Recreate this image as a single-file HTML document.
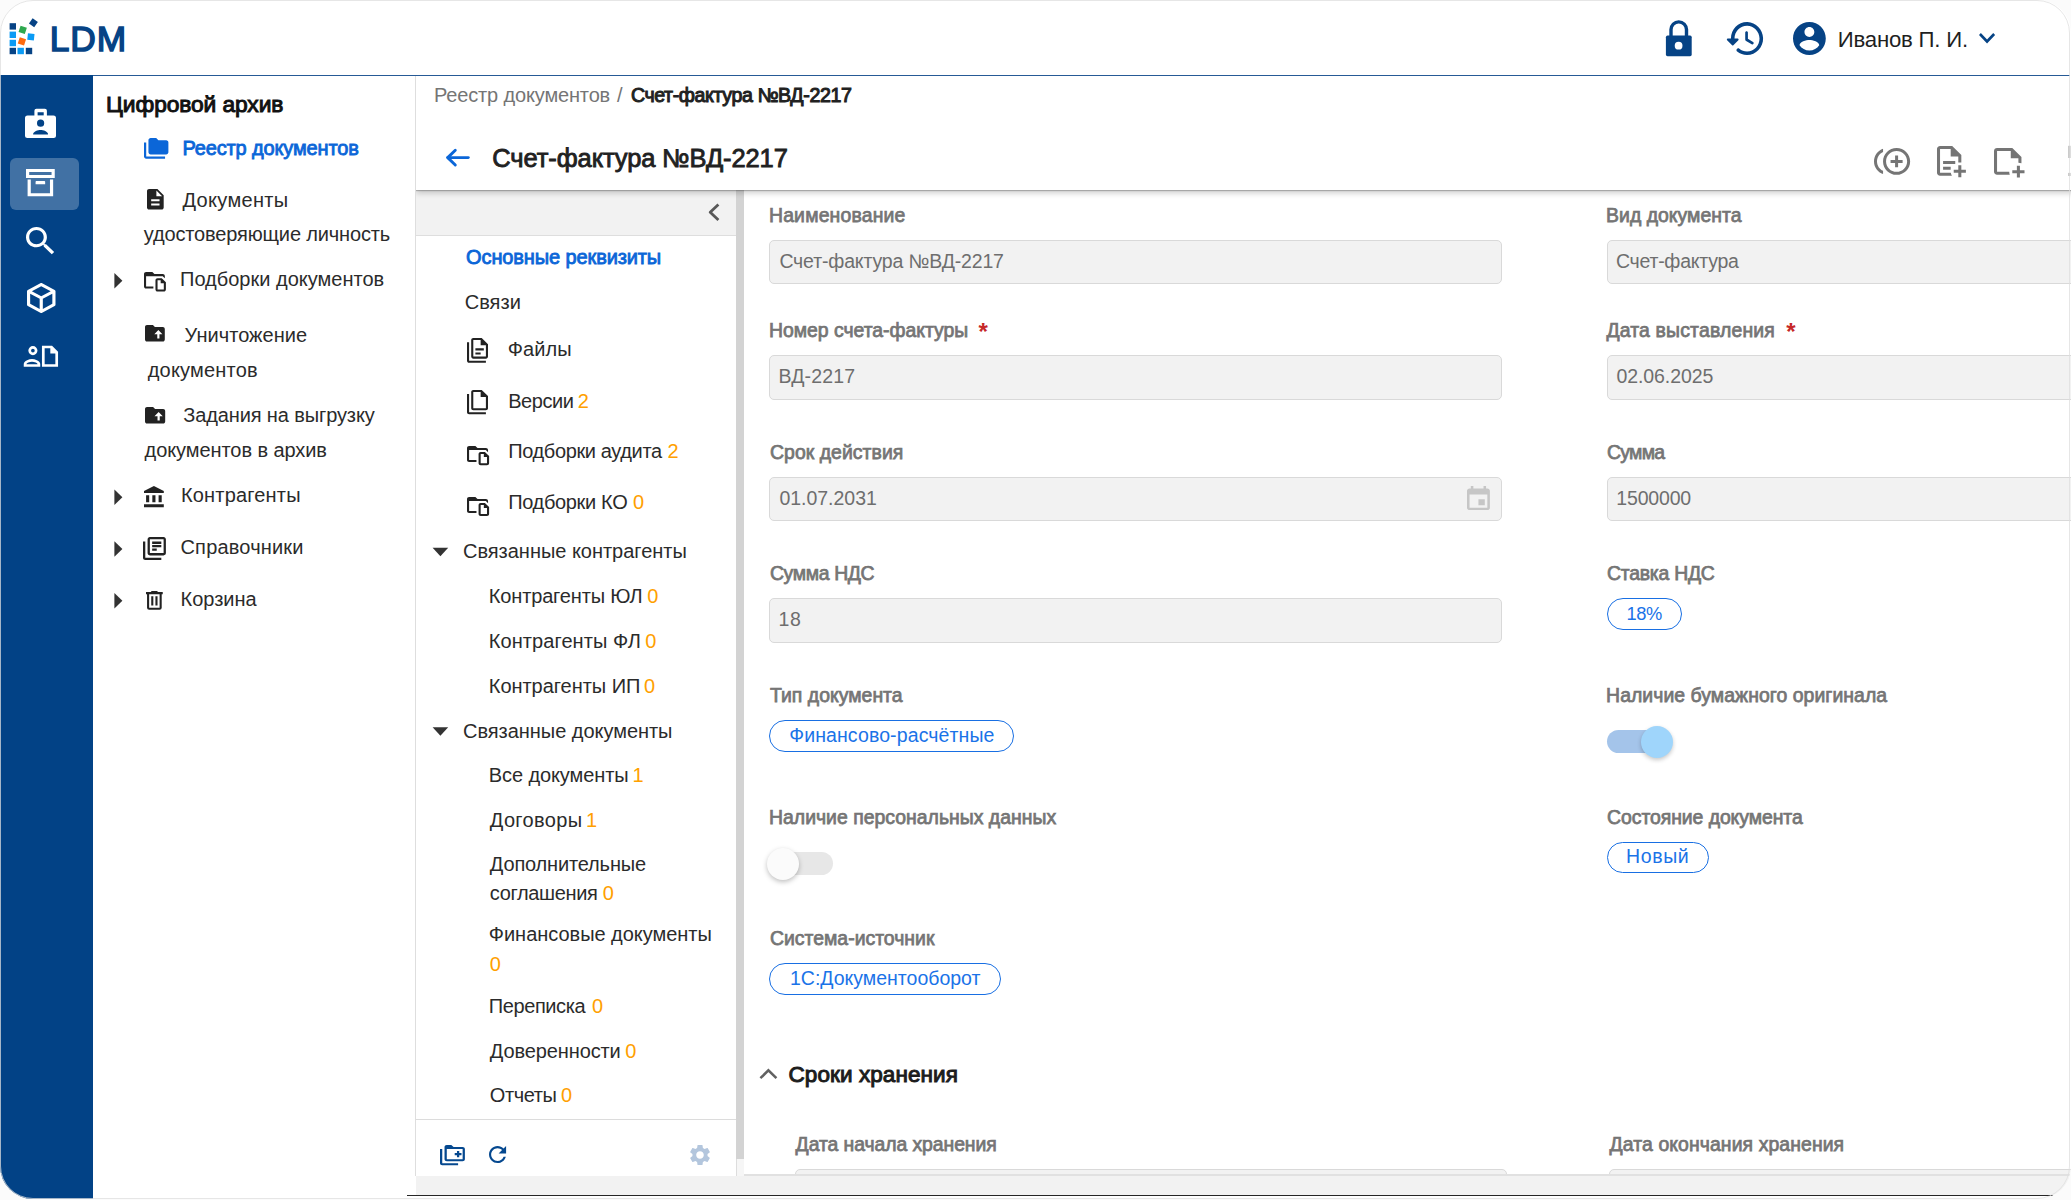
<!DOCTYPE html>
<html lang="ru"><head><meta charset="utf-8"><title>LDM — Счет-фактура №ВД-2217</title>
<style>
html,body{margin:0;padding:0}
body{width:2071px;height:1200px;overflow:hidden;background:#fbfbfb;font-family:"Liberation Sans",sans-serif;position:relative}
#f{position:absolute;left:0;top:0;width:2070.6px;height:1199.2px;border-radius:33px;overflow:hidden;background:#fff}
#fb{position:absolute;left:-0.4px;top:-0.4px;width:2068.4px;height:1197px;border-radius:33px;border:1.3px solid rgba(222,222,222,.75);z-index:50}
.a{position:absolute}
.t{position:absolute;white-space:pre;line-height:1}
.i{position:absolute;overflow:visible}
.inp{position:absolute;background:#f2f2f2;border:1.2px solid #d9d9d9;border-radius:5px;box-sizing:border-box}
.chip{position:absolute;border:1.7px solid #186fe3;border-radius:17px;box-sizing:border-box;background:#fff}
</style></head><body>
<div id="f">
<div class="a" style="left:0px;top:74.6px;width:2070px;height:1.4px;background:#265a96"></div>
<div class="a" style="left:0px;top:74.6px;width:93.1px;height:1125px;background:#024286"></div>
<div class="a" style="left:10px;top:158.4px;width:69px;height:51.3px;background:rgba(255,255,255,.25);border-radius:6px"></div>
<div class="a" style="left:415px;top:76px;width:1px;height:1100px;background:#dedede"></div>
<div class="a" style="left:416px;top:190px;width:319.6px;height:45.6px;background:#f2f2f2;border-bottom:1px solid #dedede;box-sizing:border-box"></div>
<div class="a" style="left:735.6px;top:190px;width:8.0px;height:968.5px;background:#d3d3d3"></div>
<div class="a" style="left:735.6px;top:1158.5px;width:8.0px;height:18px;background:#f6f6f6;border-left:1px solid #ddd;box-sizing:border-box"></div>
<div class="a" style="left:416px;top:1119.2px;width:319.6px;height:1px;background:#dcdcdc"></div>
<div class="inp" style="left:769.4px;top:240.3px;width:732.4px;height:43.7px"></div>
<div class="inp" style="left:769.4px;top:355px;width:732.4px;height:44.6px"></div>
<div class="inp" style="left:769.4px;top:477px;width:732.4px;height:43.9px"></div>
<div class="inp" style="left:769.4px;top:598.2px;width:732.4px;height:44.5px"></div>
<div class="inp" style="left:1606.7px;top:240.3px;width:520px;height:43.7px"></div>
<div class="inp" style="left:1606.7px;top:355px;width:520px;height:44.6px"></div>
<div class="inp" style="left:1606.7px;top:477px;width:520px;height:43.9px"></div>
<div class="inp" style="left:795px;top:1169.3px;width:711.5px;height:44px"></div>
<div class="inp" style="left:1609px;top:1169.3px;width:520px;height:44px"></div>
<div class="chip" style="left:1606.7px;top:598.2px;width:75.1px;height:31.9px"></div>
<div class="chip" style="left:769.4px;top:720.25px;width:244.3px;height:31.4px"></div>
<div class="chip" style="left:1606.7px;top:841.5px;width:102.0px;height:31.9px"></div>
<div class="chip" style="left:769.4px;top:963.3px;width:231.2px;height:31.6px"></div>
<div class="a" style="left:1606.7px;top:730.3px;width:63.8px;height:22.6px;background:#a4c4ea;border-radius:12px"></div>
<div class="a" style="left:1641.1px;top:726px;width:32px;height:32px;background:#9fd5fb;border-radius:50%;box-shadow:0 2px 4px rgba(0,0,0,.22)"></div>
<div class="a" style="left:769.6px;top:852px;width:63.8px;height:23.2px;background:#e7e7e7;border-radius:12px"></div>
<div class="a" style="left:767.1px;top:848px;width:32px;height:32px;background:#fbfbfb;border-radius:50%;box-shadow:0 2px 5px rgba(0,0,0,.25)"></div>
<div class="a" style="left:416px;top:76px;width:1660px;height:114.3px;background:#fff;box-shadow:0 1px 1px rgba(0,0,0,.22),0 3px 6px rgba(0,0,0,.2);clip-path:inset(0 0 -12px 0);z-index:5"></div>
<div class="a" style="left:743.6px;top:1174.1px;width:1330px;height:1.8px;background:#e1e1e1;z-index:6"></div>
<div class="a" style="left:416px;top:1175.8px;width:1660px;height:19.3px;background:#f2f2f2;z-index:6"></div>
<div class="a" style="left:407px;top:1194.7px;width:1670px;height:1.4px;background:#262626;z-index:7"></div>
<div class="a" style="left:93.1px;top:1196.1px;width:1980px;height:5px;background:#fff;z-index:6"></div>
<div class="a" style="left:0;top:0;width:2071px;height:1200px;z-index:9">
<svg class="i" style="left:1726.80px;top:21.80px" width="36.10" height="33.10" viewBox="1.8 2.95 20.2 18.05" preserveAspectRatio="none"><path fill="#064385" fill-rule="evenodd" d="M13.26 3C8.17 2.86 4 6.95 4 12H2.21c-.45 0-.67.54-.35.85l2.79 2.8c.2.2.51.2.71 0l2.79-2.8c.31-.31.09-.85-.36-.85H6c0-3.9 3.18-7.05 7.1-7 3.72.05 6.85 3.18 6.9 6.9.05 3.91-3.1 7.1-7 7.1-1.61 0-3.1-.55-4.28-1.48-.4-.31-.96-.28-1.32.08-.42.42-.39 1.13.08 1.49C9 20.29 10.91 21 13 21c5.05 0 9.14-4.17 9-9.26-.13-4.69-4.05-8.61-8.74-8.74zm-.51 5c-.41 0-.75.34-.75.75v3.68c0 .35.19.68.49.86l3.12 1.85c.36.21.82.09 1.03-.26.21-.36.09-.82-.26-1.03l-2.88-1.71v-3.4c0-.4-.34-.74-.75-.74z"/></svg>
<svg class="i" style="left:1793.00px;top:21.80px" width="32.80" height="33.10" viewBox="2 2 20 20" preserveAspectRatio="none"><path fill="#064385" fill-rule="evenodd" d="M12 2C6.48 2 2 6.48 2 12s4.48 10 10 10 10-4.48 10-10S17.52 2 12 2zm0 3c1.66 0 3 1.34 3 3s-1.34 3-3 3-3-1.34-3-3 1.34-3 3-3zm0 14.2c-2.5 0-4.71-1.28-6-3.22.03-1.99 4-3.08 6-3.08 1.99 0 5.97 1.09 6 3.08-1.29 1.94-3.5 3.22-6 3.22z"/></svg>
<svg class="i" style="left:1978.90px;top:33.10px" width="16.10" height="10.50" viewBox="6 8.59 12 7.41" preserveAspectRatio="none"><path fill="#064385" fill-rule="evenodd" d="M16.59 8.59L12 13.17 7.41 8.59 6 10l6 6 6-6z"/></svg>
<svg class="i" style="left:1873.75px;top:147.50px" width="36.15" height="26.80" viewBox="0 3 24 18" preserveAspectRatio="none"><path fill="#757575" fill-rule="evenodd" d="M16 8h-2v3h-3v2h3v3h2v-3h3v-2h-3zM2 12c0-2.79 1.64-5.2 4.01-6.32V3.52C2.52 4.76 0 8.09 0 12s2.52 7.24 6.01 8.48v-2.16C3.64 17.2 2 14.79 2 12zm13-9c-4.96 0-9 4.04-9 9s4.04 9 9 9 9-4.04 9-9-4.04-9-9-9zm0 16c-3.86 0-7-3.14-7-7s3.14-7 7-7 7 3.14 7 7-3.14 7-7 7z"/></svg>
<svg class="i" style="left:1937.10px;top:146.10px" width="28.90" height="31.30" viewBox="4 2 19 21" preserveAspectRatio="none"><path fill="#757575" fill-rule="evenodd" d="M23 18H20V15H18V18H15V20H18V23H20V20H23M6 2C4.89 2 4 2.9 4 4V20C4 21.11 4.89 22 6 22H13.81C13.45 21.38 13.2 20.7 13.08 20H6V4H13V9H18V13.08C18.33 13.03 18.67 13 19 13C19.34 13 19.67 13.03 20 13.08V8L14 2M8 12V14H16V12M8 16V18H13V16Z"/></svg>
<svg class="i" style="left:1993.50px;top:147.80px" width="30.50" height="29.60" viewBox="3 3 20 20" preserveAspectRatio="none"><path fill="#757575" fill-rule="evenodd" d="M19 13C19.7 13 20.37 13.13 21 13.35V9L15 3H5C3.89 3 3 3.89 3 5V19C3 20.11 3.9 21 5 21H13.35C13.13 20.37 13 19.7 13 19H5V5H14V10H19V13M23 18V20H20V23H18V20H15V18H18V15H20V18H23Z"/></svg>
<svg class="i" style="left:143.60px;top:137.50px" width="24.40" height="20.80" viewBox="1 2 22 19" preserveAspectRatio="none"><path fill="#0b66d8" fill-rule="evenodd" d="M3 6H1v13c0 1.1.9 2 2 2h17v-2H3V6z M21 4h-7l-2-2H7c-1.1 0-1.99.9-1.99 2L5 15c0 1.1.9 2 2 2h14c1.1 0 2-.9 2-2V6c0-1.1-.9-2-2-2z"/></svg>
<svg class="i" style="left:147.40px;top:189.30px" width="16.70" height="20.60" viewBox="4 2 16 20" preserveAspectRatio="none"><path fill="#222" fill-rule="evenodd" d="M14 2H6c-1.1 0-1.99.9-1.99 2L4 20c0 1.1.89 2 1.99 2H18c1.1 0 2-.9 2-2V8l-6-6zm2 16H8v-2h8v2zm0-4H8v-2h8v2zm-3-5V3.5L18.5 9H13z"/></svg>
<svg class="i" style="left:143.60px;top:272.00px" width="21.90" height="19.60" viewBox="2 4 21 19" preserveAspectRatio="none"><path fill="#222" fill-rule="evenodd" d="M4 18H11V20H4C2.9 20 2 19.11 2 18V6C2 4.89 2.89 4 4 4H10L12 6H20C21.1 6 22 6.89 22 8V10.17L20.41 8.59L20 8.17V8H4V18M23 14V21C23 22.11 22.11 23 21 23H15C13.9 23 13 22.11 13 21V12C13 10.9 13.9 10 15 10H19L23 14M21 15H18V12H15V21H21V15Z"/></svg>
<svg class="i" style="left:145.40px;top:325.30px" width="19.80" height="16.50" viewBox="2 4 20 16" preserveAspectRatio="none"><path fill="#222" fill-rule="evenodd" d="M20 6h-8l-2-2H4c-1.1 0-1.99.9-1.99 2L2 18c0 1.1.9 2 2 2h16c1.1 0 2-.9 2-2V8c0-1.1-.9-2-2-2zM16.6 13v4h-2.2v-4h-3l4.1-4.2L19.6 13h-3z"/></svg>
<svg class="i" style="left:145.40px;top:407.40px" width="20.20" height="16.60" viewBox="2 4 20 16" preserveAspectRatio="none"><path fill="#222" fill-rule="evenodd" d="M20 6h-8l-2-2H4c-1.1 0-1.99.9-1.99 2L2 18c0 1.1.9 2 2 2h16c1.1 0 2-.9 2-2V8c0-1.1-.9-2-2-2zM16.6 13v4h-2.2v-4h-3l4.1-4.2L19.6 13h-3z"/></svg>
<svg class="i" style="left:144.00px;top:486.00px" width="19.80" height="21.30" viewBox="2 1 19 21" preserveAspectRatio="none"><path fill="#222" fill-rule="evenodd" d="M4 10v7h3v-7H4zm6 0v7h3v-7h-3zM2 22h19v-3H2v3zm14-12v7h3v-7h-3zm-4.5-9L2 6v2h19V6l-9.5-5z"/></svg>
<svg class="i" style="left:143.00px;top:537.00px" width="22.90" height="23.00" viewBox="2 2 20 20" preserveAspectRatio="none"><path fill="#222" fill-rule="evenodd" d="M4 6H2v14c0 1.1.9 2 2 2h14v-2H4V6zm16-4H8c-1.1 0-2 .9-2 2v12c0 1.1.9 2 2 2h12c1.1 0 2-.9 2-2V4c0-1.1-.9-2-2-2zm0 14H8V4h12v12zM10 9h8v2h-8zm0 3h4v2h-4zm0-6h8v2h-8z"/></svg>
<svg class="i" style="left:146.00px;top:590.80px" width="16.75" height="18.80" viewBox="4 3 16 18" preserveAspectRatio="none"><path fill="#222" fill-rule="evenodd" d="M9,3V4H4V6H5V19A2,2 0 0,0 7,21H17A2,2 0 0,0 19,19V6H20V4H15V3H9M7,6H17V19H7V6M9,8V17H11V8H9M13,8V17H15V8H13Z"/></svg>
<svg class="i" style="left:467.00px;top:338.25px" width="21.00" height="24.75" viewBox="2 0 20 24" preserveAspectRatio="none"><path fill="#222" fill-rule="evenodd" d="M16,0H8C6.9,0 6,0.9 6,2V18C6,19.1 6.9,20 8,20H20C21.1,20 22,19.1 22,18V6L16,0M20,18H8V2H15V7H20V18M4,4V22H20V24H4C2.9,24 2,23.1 2,22V4H4M10,10V12H18V10H10M10,14V16H15V14H10Z"/></svg>
<svg class="i" style="left:467.00px;top:389.60px" width="21.00" height="24.30" viewBox="2 0 20 24" preserveAspectRatio="none"><path fill="#222" fill-rule="evenodd" d="M16,0H8C6.9,0 6,0.9 6,2V18C6,19.1 6.9,20 8,20H20C21.1,20 22,19.1 22,18V6L16,0M20,18H8V2H15V7H20V18M4,4V22H20V24H4C2.9,24 2,23.1 2,22V4H4Z"/></svg>
<svg class="i" style="left:467.00px;top:445.75px" width="22.10" height="19.15" viewBox="2 4 21 19" preserveAspectRatio="none"><path fill="#222" fill-rule="evenodd" d="M4 18H11V20H4C2.9 20 2 19.11 2 18V6C2 4.89 2.89 4 4 4H10L12 6H20C21.1 6 22 6.89 22 8V10.17L20.41 8.59L20 8.17V8H4V18M23 14V21C23 22.11 22.11 23 21 23H15C13.9 23 13 22.11 13 21V12C13 10.9 13.9 10 15 10H19L23 14M21 15H18V12H15V21H21V15Z"/></svg>
<svg class="i" style="left:467.00px;top:496.80px" width="22.10" height="19.10" viewBox="2 4 21 19" preserveAspectRatio="none"><path fill="#222" fill-rule="evenodd" d="M4 18H11V20H4C2.9 20 2 19.11 2 18V6C2 4.89 2.89 4 4 4H10L12 6H20C21.1 6 22 6.89 22 8V10.17L20.41 8.59L20 8.17V8H4V18M23 14V21C23 22.11 22.11 23 21 23H15C13.9 23 13 22.11 13 21V12C13 10.9 13.9 10 15 10H19L23 14M21 15H18V12H15V21H21V15Z"/></svg>
<svg class="i" style="left:440.10px;top:1144.70px" width="24.90" height="20.30" viewBox="2 2 22 20" preserveAspectRatio="none"><path fill="#05488f" fill-rule="evenodd" d="M4 6H2v14c0 1.1.9 2 2 2h14v-2H4V6z M22 4h-8l-2-2H8c-1.1 0-2 .9-2 2v12c0 1.1.9 2 2 2h14c1.1 0 2-.9 2-2V6c0-1.1-.9-2-2-2z M22 16H8V6h14v10z M17 8h2v2h2v2h-2v2h-2v-2h-2v-2h2z"/></svg>
<svg class="i" style="left:489.40px;top:1146.20px" width="17.10" height="17.10" viewBox="4 4 16 16" preserveAspectRatio="none"><path fill="#05488f" fill-rule="evenodd" d="M17.65 6.35C16.2 4.9 14.21 4 12 4c-4.42 0-7.99 3.58-7.99 8s3.57 8 7.99 8c3.73 0 6.84-2.55 7.73-6h-2.08c-.82 2.33-3.04 4-5.65 4-3.31 0-6-2.69-6-6s2.69-6 6-6c1.66 0 3.14.69 4.22 1.78L13 11h7V4l-2.35 2.35z"/></svg>
<svg class="i" style="left:690.00px;top:1144.80px" width="20.00" height="20.10" viewBox="2.5 2.4 19.0 19.200000000000003" preserveAspectRatio="none"><path fill="#b3c6dd" fill-rule="evenodd" d="M19.14 12.94c.04-.3.06-.61.06-.94 0-.32-.02-.64-.07-.94l2.03-1.58c.18-.14.23-.41.12-.61l-1.92-3.32c-.12-.22-.37-.29-.59-.22l-2.39.96c-.5-.38-1.03-.7-1.62-.94l-.36-2.54c-.04-.24-.24-.41-.48-.41h-3.84c-.24 0-.43.17-.47.41l-.36 2.54c-.59.24-1.13.57-1.62.94l-2.39-.96c-.22-.08-.47 0-.59.22L2.74 8.87c-.12.21-.08.47.12.61l2.03 1.58c-.05.3-.09.63-.09.94s.02.64.07.94l-2.03 1.58c-.18.14-.23.41-.12.61l1.92 3.32c.12.22.37.29.59.22l2.39-.96c.5.38 1.03.7 1.62.94l.36 2.54c.05.24.24.41.48.41h3.84c.24 0 .44-.17.47-.41l.36-2.54c.59-.24 1.13-.56 1.62-.94l2.39.96c.22.08.47 0 .59-.22l1.92-3.32c.12-.22.07-.47-.12-.61l-2.01-1.58zM12 15.6c-1.98 0-3.6-1.62-3.6-3.6s1.62-3.6 3.6-3.6 3.6 1.62 3.6 3.6-1.62 3.6-3.6 3.6z"/></svg>
<svg class="i" style="left:1467.10px;top:485.70px" width="22.90" height="24.10" viewBox="3 1 18 20" preserveAspectRatio="none"><path fill="#c6c6c6" fill-rule="evenodd" d="M17 12h-5v5h5v-5zM16 1v2H8V1H6v2H5c-1.11 0-1.99.9-1.99 2L3 19c0 1.1.89 2 2 2h14c1.1 0 2-.9 2-2V5c0-1.1-.9-2-2-2h-1V1h-2zm3 18H5V8h14v11z"/></svg>
<svg class="i" style="left:26.25px;top:168.75px" width="28.75" height="27.25" viewBox="3 3 18 18" preserveAspectRatio="none"><path fill="#fff" fill-rule="evenodd" d="M20 21H4V10H6V19H18V10H20V21M3 3H21V9H3V3M9.5 11H14.5C14.78 11 15 11.22 15 11.5V13H9V11.5C9 11.22 9.22 11 9.5 11M5 5V7H19V5H5Z"/></svg>
<svg class="i" style="left:26.25px;top:226.50px" width="28.15" height="27.25" viewBox="3 3 17.49 17.49" preserveAspectRatio="none"><path fill="#fff" fill-rule="evenodd" d="M15.5 14h-.79l-.28-.27C15.41 12.59 16 11.11 16 9.5 16 5.91 13.09 3 9.5 3S3 5.91 3 9.5 5.91 16 9.5 16c1.61 0 3.09-.59 4.23-1.57l.27.28v.79l5 4.99L20.49 19l-4.99-5zm-6 0C7.01 14 5 11.99 5 9.5S7.01 5 9.5 5 14 7.01 14 9.5 11.99 14 9.5 14z"/></svg>
<svg class="i" style="left:26.50px;top:283.00px" width="28.50" height="30.00" viewBox="3 2 18 20" preserveAspectRatio="none"><path fill="#fff" fill-rule="evenodd" d="M21,16.5C21,16.88 20.79,17.21 20.47,17.38L12.57,21.82C12.41,21.94 12.21,22 12,22C11.79,22 11.59,21.94 11.43,21.82L3.53,17.38C3.21,17.21 3,16.88 3,16.5V7.5C3,7.12 3.21,6.79 3.53,6.62L11.43,2.18C11.59,2.06 11.79,2 12,2C12.21,2 12.41,2.06 12.57,2.18L20.47,6.62C20.79,6.79 21,7.12 21,7.5V16.5M12,4.15L6.04,7.5L12,10.85L17.96,7.5L12,4.15M5,15.91L11,19.29V12.58L5,9.21V15.91M19,15.91V9.21L13,12.58V19.29L19,15.91Z"/></svg>
<span class="t" style="left:49.75px;top:21px;font-size:35.3px;color:#064385;letter-spacing:0.990px;-webkit-text-stroke:1.5px #064385;">LDM</span>
<span class="t" style="left:1837.80px;top:29px;font-size:22.2px;color:#1f1f1f;letter-spacing:-0.227px;">Иванов П. И.</span>
<span class="t" style="left:106.10px;top:93px;font-size:22.8px;color:#111;letter-spacing:-0.104px;-webkit-text-stroke:1.0px #111;">Цифровой архив</span>
<span class="t" style="left:182.43px;top:138px;font-size:20px;color:#0b66d8;letter-spacing:-0.145px;-webkit-text-stroke:0.85px #0b66d8;">Реестр документов</span>
<span class="t" style="left:182.50px;top:190px;font-size:20px;color:#2b2b2b;letter-spacing:0.310px;">Документы</span>
<span class="t" style="left:143.80px;top:224px;font-size:20px;color:#2b2b2b;letter-spacing:-0.152px;">удостоверяющие личность</span>
<span class="t" style="left:180.00px;top:269px;font-size:20px;color:#2b2b2b;letter-spacing:0.010px;">Подборки документов</span>
<span class="t" style="left:184.60px;top:325px;font-size:20px;color:#2b2b2b;letter-spacing:0.040px;">Уничтожение</span>
<span class="t" style="left:147.75px;top:360px;font-size:20px;color:#2b2b2b;letter-spacing:0.192px;">документов</span>
<span class="t" style="left:183.20px;top:405px;font-size:20px;color:#2b2b2b;letter-spacing:-0.115px;">Задания на выгрузку</span>
<span class="t" style="left:144.60px;top:440px;font-size:20px;color:#2b2b2b;letter-spacing:-0.081px;">документов в архив</span>
<span class="t" style="left:180.90px;top:485px;font-size:20px;color:#2b2b2b;letter-spacing:0.189px;">Контрагенты</span>
<span class="t" style="left:180.50px;top:537px;font-size:20px;color:#2b2b2b;letter-spacing:0.181px;">Справочники</span>
<span class="t" style="left:180.50px;top:589px;font-size:20px;color:#2b2b2b;letter-spacing:-0.010px;">Корзина</span>
<span class="t" style="left:434.00px;top:85px;font-size:20px;color:#757575;letter-spacing:-0.154px;">Реестр документов</span>
<span class="t" style="left:617.00px;top:85px;font-size:20px;color:#757575;">/</span>
<span class="t" style="left:630.90px;top:86px;font-size:19.6px;color:#212121;letter-spacing:-0.392px;-webkit-text-stroke:1.0px #212121;">Счет-фактура №ВД-2217</span>
<span class="t" style="left:492.32px;top:146px;font-size:25.5px;color:#212121;letter-spacing:-0.108px;-webkit-text-stroke:0.85px #212121;">Счет-фактура №ВД-2217</span>
<span class="t" style="left:466.12px;top:247px;font-size:20px;color:#0b66d8;letter-spacing:-0.117px;-webkit-text-stroke:0.85px #0b66d8;">Основные реквизиты</span>
<span class="t" style="left:464.70px;top:292px;font-size:20px;color:#2b2b2b;letter-spacing:0.039px;">Связи</span>
<span class="t" style="left:507.70px;top:339px;font-size:20px;color:#2b2b2b;letter-spacing:0.083px;">Файлы</span>
<span class="t" style="left:508.20px;top:391px;font-size:20px;color:#2b2b2b;letter-spacing:-0.452px;">Версии</span>
<span class="t" style="left:577.70px;top:391px;font-size:20px;color:#ffa000;">2</span>
<span class="t" style="left:508.20px;top:441px;font-size:20px;color:#2b2b2b;letter-spacing:-0.366px;">Подборки аудита</span>
<span class="t" style="left:667.60px;top:441px;font-size:20px;color:#ffa000;">2</span>
<span class="t" style="left:508.20px;top:492px;font-size:20px;color:#2b2b2b;letter-spacing:-0.333px;">Подборки КО</span>
<span class="t" style="left:633.00px;top:492px;font-size:20px;color:#ffa000;">0</span>
<span class="t" style="left:463.00px;top:541px;font-size:20px;color:#2b2b2b;letter-spacing:-0.022px;">Связанные контрагенты</span>
<span class="t" style="left:488.80px;top:586px;font-size:20px;color:#2b2b2b;letter-spacing:-0.150px;">Контрагенты ЮЛ</span>
<span class="t" style="left:647.30px;top:586px;font-size:20px;color:#ffa000;">0</span>
<span class="t" style="left:488.80px;top:631px;font-size:20px;color:#2b2b2b;letter-spacing:0.078px;">Контрагенты ФЛ</span>
<span class="t" style="left:645.25px;top:631px;font-size:20px;color:#ffa000;">0</span>
<span class="t" style="left:488.80px;top:676px;font-size:20px;color:#2b2b2b;letter-spacing:-0.040px;">Контрагенты ИП</span>
<span class="t" style="left:644.00px;top:676px;font-size:20px;color:#ffa000;">0</span>
<span class="t" style="left:463.00px;top:721px;font-size:20px;color:#2b2b2b;letter-spacing:-0.035px;">Связанные документы</span>
<span class="t" style="left:488.80px;top:765px;font-size:20px;color:#2b2b2b;letter-spacing:-0.103px;">Все документы</span>
<span class="t" style="left:632.40px;top:765px;font-size:20px;color:#ffa000;">1</span>
<span class="t" style="left:489.80px;top:810px;font-size:20px;color:#2b2b2b;letter-spacing:0.340px;">Договоры</span>
<span class="t" style="left:586.00px;top:810px;font-size:20px;color:#ffa000;">1</span>
<span class="t" style="left:489.80px;top:854px;font-size:20px;color:#2b2b2b;letter-spacing:-0.154px;">Дополнительные</span>
<span class="t" style="left:489.80px;top:883px;font-size:20px;color:#2b2b2b;letter-spacing:-0.353px;">соглашения</span>
<span class="t" style="left:602.80px;top:883px;font-size:20px;color:#ffa000;">0</span>
<span class="t" style="left:488.80px;top:924px;font-size:20px;color:#2b2b2b;letter-spacing:-0.028px;">Финансовые документы</span>
<span class="t" style="left:489.80px;top:954px;font-size:20px;color:#ffa000;">0</span>
<span class="t" style="left:488.80px;top:996px;font-size:20px;color:#2b2b2b;letter-spacing:-0.404px;">Переписка</span>
<span class="t" style="left:592.00px;top:996px;font-size:20px;color:#ffa000;">0</span>
<span class="t" style="left:489.80px;top:1041px;font-size:20px;color:#2b2b2b;letter-spacing:-0.112px;">Доверенности</span>
<span class="t" style="left:625.20px;top:1041px;font-size:20px;color:#ffa000;">0</span>
<span class="t" style="left:489.80px;top:1085px;font-size:20px;color:#2b2b2b;letter-spacing:-0.391px;">Отчеты</span>
<span class="t" style="left:561.10px;top:1085px;font-size:20px;color:#ffa000;">0</span>
<span class="t" style="left:768.98px;top:206px;font-size:19.4px;color:#757575;letter-spacing:0.183px;-webkit-text-stroke:0.75px #757575;">Наименование</span>
<span class="t" style="left:768.98px;top:321px;font-size:19.4px;color:#757575;letter-spacing:-0.008px;-webkit-text-stroke:0.75px #757575;">Номер счета-фактуры</span>
<span class="t" style="left:978.50px;top:320px;font-size:24px;color:#c62828;font-weight:700;">*</span>
<span class="t" style="left:769.98px;top:443px;font-size:19.4px;color:#757575;letter-spacing:0.064px;-webkit-text-stroke:0.75px #757575;">Срок действия</span>
<span class="t" style="left:769.98px;top:564px;font-size:19.4px;color:#757575;letter-spacing:-0.350px;-webkit-text-stroke:0.75px #757575;">Сумма НДС</span>
<span class="t" style="left:769.98px;top:686px;font-size:19.4px;color:#757575;letter-spacing:0.031px;-webkit-text-stroke:0.75px #757575;">Тип документа</span>
<span class="t" style="left:768.98px;top:808px;font-size:19.4px;color:#757575;letter-spacing:0.021px;-webkit-text-stroke:0.75px #757575;">Наличие персональных данных</span>
<span class="t" style="left:769.98px;top:929px;font-size:19.4px;color:#757575;letter-spacing:0.014px;-webkit-text-stroke:0.75px #757575;">Система-источник</span>
<span class="t" style="left:1606.08px;top:206px;font-size:19.4px;color:#757575;letter-spacing:0.027px;-webkit-text-stroke:0.75px #757575;">Вид документа</span>
<span class="t" style="left:1606.38px;top:321px;font-size:19.4px;color:#757575;letter-spacing:0.183px;-webkit-text-stroke:0.75px #757575;">Дата выставления</span>
<span class="t" style="left:1786.20px;top:320px;font-size:24px;color:#c62828;font-weight:700;">*</span>
<span class="t" style="left:1607.08px;top:443px;font-size:19.4px;color:#757575;letter-spacing:-0.723px;-webkit-text-stroke:0.75px #757575;">Сумма</span>
<span class="t" style="left:1607.08px;top:564px;font-size:19.4px;color:#757575;letter-spacing:-0.247px;-webkit-text-stroke:0.75px #757575;">Ставка НДС</span>
<span class="t" style="left:1606.08px;top:686px;font-size:19.4px;color:#757575;letter-spacing:0.059px;-webkit-text-stroke:0.75px #757575;">Наличие бумажного оригинала</span>
<span class="t" style="left:1607.08px;top:808px;font-size:19.4px;color:#757575;letter-spacing:-0.059px;-webkit-text-stroke:0.75px #757575;">Состояние документа</span>
<span class="t" style="left:795.58px;top:1135px;font-size:19.4px;color:#757575;letter-spacing:-0.074px;-webkit-text-stroke:0.75px #757575;">Дата начала хранения</span>
<span class="t" style="left:1609.58px;top:1135px;font-size:19.4px;color:#757575;letter-spacing:0.097px;-webkit-text-stroke:0.75px #757575;">Дата окончания хранения</span>
<span class="t" style="left:788.50px;top:1064px;font-size:22.5px;color:#1c1c1c;letter-spacing:0.081px;-webkit-text-stroke:1.0px #1c1c1c;">Сроки хранения</span>
<span class="t" style="left:779.40px;top:252px;font-size:19.5px;color:#6e6e6e;letter-spacing:-0.155px;">Счет-фактура №ВД-2217</span>
<span class="t" style="left:778.40px;top:367px;font-size:19.5px;color:#6e6e6e;letter-spacing:0.165px;">ВД-2217</span>
<span class="t" style="left:779.40px;top:489px;font-size:19.5px;color:#6e6e6e;letter-spacing:-0.017px;">01.07.2031</span>
<span class="t" style="left:778.40px;top:610px;font-size:19.5px;color:#6e6e6e;letter-spacing:0.755px;">18</span>
<span class="t" style="left:1616.00px;top:252px;font-size:19.5px;color:#6e6e6e;letter-spacing:-0.255px;">Счет-фактура</span>
<span class="t" style="left:1616.50px;top:367px;font-size:19.5px;color:#6e6e6e;letter-spacing:-0.094px;">02.06.2025</span>
<span class="t" style="left:1616.30px;top:489px;font-size:19.5px;color:#6e6e6e;letter-spacing:-0.178px;">1500000</span>
<span class="t" style="left:1626.60px;top:605px;font-size:18.3px;color:#1a73e8;letter-spacing:-0.467px;">18%</span>
<span class="t" style="left:789.20px;top:726px;font-size:19.5px;color:#1a73e8;letter-spacing:0.115px;">Финансово-расчётные</span>
<span class="t" style="left:1626.00px;top:847px;font-size:19.5px;color:#1a73e8;letter-spacing:0.624px;">Новый</span>
<span class="t" style="left:790.00px;top:969px;font-size:19.5px;color:#1a73e8;letter-spacing:-0.006px;">1С:Документооборот</span>
</div>
<svg class="i" style="left:0;top:0;z-index:8" width="2071" height="1200" viewBox="0 0 2071 1200">
<rect x="9.6" y="23.2" width="6.4" height="6.4" fill="#064385" transform="rotate(0 12.8 26.4)"/>
<rect x="9.6" y="31.6" width="6.4" height="6.4" fill="#0a9bf5" transform="rotate(0 12.8 34.800000000000004)"/>
<rect x="9.6" y="39.8" width="6.4" height="6.4" fill="#0a9bf5" transform="rotate(0 12.8 43.0)"/>
<rect x="9.6" y="47.8" width="6.4" height="6.4" fill="#064385" transform="rotate(0 12.8 51.0)"/>
<rect x="17.5" y="47.8" width="6.4" height="6.4" fill="#0a9bf5" transform="rotate(0 20.7 51.0)"/>
<rect x="25.8" y="47.8" width="6.4" height="6.4" fill="#064385" transform="rotate(0 29.0 51.0)"/>
<rect x="19.4" y="26.6" width="6.6" height="6.6" fill="#2ea84f" transform="rotate(18 22.7 29.900000000000002)"/>
<rect x="18.6" y="38" width="6.6" height="6.6" fill="#ff6a0d" transform="rotate(18 21.900000000000002 41.3)"/>
<rect x="27.6" y="33.6" width="6.6" height="6.6" fill="#0a9bf5" transform="rotate(6 30.900000000000002 36.9)"/>
<rect x="30.2" y="19.6" width="6.4" height="6.4" fill="#064385" transform="rotate(35 33.4 22.8)"/>
<rect x="1665.9" y="35.6" width="25.8" height="20.6" rx="1.6" fill="#064385"/><path d="M1671 36.5V29.6a7.75 7.75 0 0 1 15.5 0V36.5" fill="none" stroke="#064385" stroke-width="3.4"/><circle cx="1678.6" cy="45.7" r="3.9" fill="#fff"/>
<path fill="#fff" fill-rule="evenodd" d="M27.5 115.6h26a2.5 2.5 0 0 1 2.5 2.5v17.3a2.5 2.5 0 0 1-2.5 2.5h-26a2.5 2.5 0 0 1-2.5-2.5v-17.3a2.5 2.5 0 0 1 2.5-2.5z M40.6 119.6a3.6 3.6 0 1 0 0 7.2a3.6 3.6 0 1 0 0-7.2z M33.1 134.4c0-3 5-4.4 7.5-4.4s7.5 1.4 7.5 4.4z"/>
<path fill="#fff" fill-rule="evenodd" d="M36.4 108.75h8.5a2 2 0 0 1 2 2v5.5h-12.5v-5.5a2 2 0 0 1 2-2z M37.6 112.2h6.1v3.6h-6.1z"/>
<g fill="none" stroke="#fff" stroke-width="2.7"><circle cx="32.9" cy="350.6" r="3.2"/><path d="M25.1 365.5v-1.3c0-2.5 4.6-3.8 6.9-3.8s6.9 1.3 6.9 3.8v1.3z"/><path d="M43.3 347h8.2l5.2 5.2v13.3h-13.4z" stroke-linejoin="miter"/></g>
<path fill="#fff" d="M50.3 346.2v7.2h7.2z"/>
<g fill="none" stroke="#0b66d8" stroke-width="2.9" stroke-linecap="round" stroke-linejoin="round"><path d="M447.8 157.6H468.3"/><path d="M455.3 150.2L447.7 157.6L455.3 165"/></g>
<path d="M718.4 204.6L710.2 212.3L718.4 220" fill="none" stroke="#585858" stroke-width="2.8" stroke-linejoin="round"/>
<path d="M760.4 1078.2L768.4 1070.3L776.4 1078.2" fill="none" stroke="#616161" stroke-width="2.5"/>
<path fill="#333" d="M114.4 272.9L122.4 280.7L114.4 288.5z"/>
<path fill="#333" d="M114.4 489.5L122.4 497.2L114.4 504.9z"/>
<path fill="#333" d="M114.4 541.2L122.4 549.0L114.4 556.8z"/>
<path fill="#333" d="M114.4 592.9L122.4 600.7L114.4 608.5z"/>
<path fill="#333" d="M432.6 547.75H448.2L440.4 556.3z"/>
<path fill="#333" d="M432.6 727.3H448.2L440.4 735.8z"/>
<rect x="2068.4" y="145.8" width="2" height="12.2" fill="#aaa"/><rect x="2068.4" y="172.9" width="2" height="3.1" fill="#aaa"/>
</svg>
</div>
<div id="fb"></div>
</body></html>
